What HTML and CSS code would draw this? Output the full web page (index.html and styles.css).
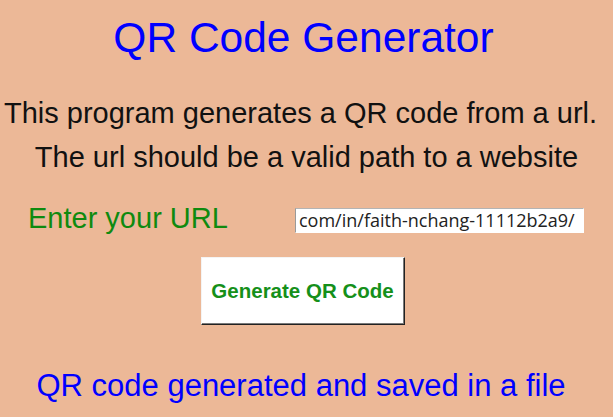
FILE: index.html
```html
<!DOCTYPE html>
<html lang="en">
<head>
<meta charset="utf-8">
<title>QR Code Generator</title>
<link rel="stylesheet" href="styles.css">
</head>
<body>
<main class="app">
  <h1 class="title">QR Code Generator</h1>
  <div class="desc">
    <p class="desc-line">This program generates a QR code from a url.</p>
    <p class="desc-line">The url should be a valid path to a website</p>
  </div>
  <div class="url-row">
    <label class="url-label" for="url">Enter your URL</label>
    <input class="url-input" id="url" type="text" value="com/in/faith-nchang-11112b2a9/">
  </div>
  <button class="gen-btn" type="button">Generate QR Code</button>
  <p class="status">QR code generated and saved in a file</p>
</main>
</body>
</html>
```

FILE: styles.css
```css
html, body {
  margin: 0;
  padding: 0;
}
body {
  background: #ecb897;
  font-family: "Liberation Sans", Arial, sans-serif;
  width: 613px;
  height: 417px;
  overflow: hidden;
}
.app {
  display: flex;
  flex-direction: column;
  align-items: center;
}
.title {
  margin: 17px 0 0 -6px;
  font-size: 42.5px;
  line-height: 42px;
  font-weight: normal;
  color: #0000ff;
}
.desc {
  margin-top: 32px;
  display: flex;
  flex-direction: column;
  align-items: center;
}
.desc-line {
  margin: 0;
  font-size: 29px;
  line-height: 44px;
  color: #111;
}
.desc-line:first-child {
  margin-left: -12px;
}
.url-row {
  margin-top: 25px;
  align-self: stretch;
  display: flex;
  align-items: center;
  justify-content: space-between;
  padding: 0 29px 0 28px;
  height: 29px;
}
.url-label {
  font-size: 29px;
  line-height: 29px;
  color: #0f8a0f;
}
.url-input {
  box-sizing: border-box;
  width: 289px;
  height: 25px;
  margin: 3px 0 0 0;
  padding: 0 3px;
  border: 1px solid;
  border-color: #b4b4b4 #ffffff #ffffff #9a9a9a;
  background: #fff;
  font-family: "Open Sans", "Noto Sans", sans-serif;
  font-size: 18px;
  color: #222;
  outline: none;
}
.gen-btn {
  margin-top: 24px;
  margin-left: -8px;
  box-sizing: border-box;
  width: 204px;
  height: 68px;
  background: #fff;
  border: 1px solid;
  border-color: #f4f4f4 #222 #222 #f4f4f4;
  box-shadow: inset -1px -1px 0 #7a7a7a;
  font-family: "Liberation Sans", Arial, sans-serif;
  font-weight: bold;
  font-size: 20.5px;
  color: #15901a;
  padding: 0;
}
.status {
  margin: 45px 0 0 -11px;
  font-size: 31px;
  line-height: 31px;
  color: #0000ff;
}
```
